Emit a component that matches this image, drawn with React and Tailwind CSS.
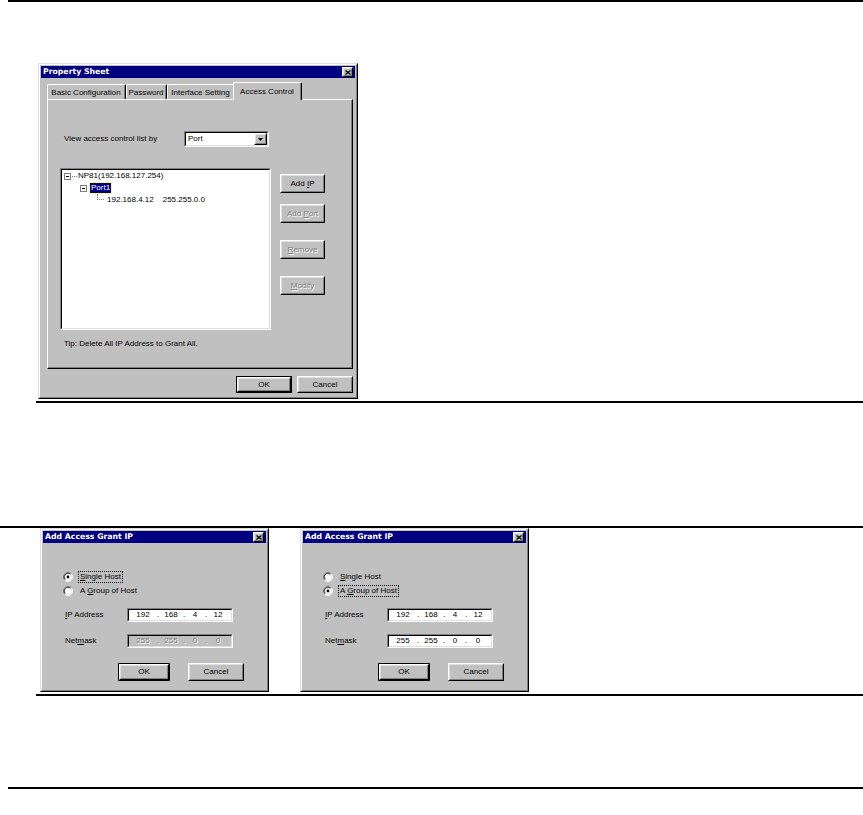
import React from "react";

const SANS = "font-['Liberation_Sans',Arial,sans-serif]";

function Raised({ className = "", children, def = false }) {
  const btn = (
    <div
      className={`border border-t-white border-l-white border-r-black border-b-black bg-[#c0c0c0] ${
        def ? "h-full w-full" : className
      }`}
    >
      <div className="h-full w-full border border-t-[#dfdfdf] border-l-[#dfdfdf] border-r-[#808080] border-b-[#808080] flex items-center justify-center">
        {children}
      </div>
    </div>
  );
  if (def) return <div className={`border border-black ${className}`}>{btn}</div>;
  return btn;
}

function Sunken({ className = "", inner = "", children }) {
  return (
    <div className={`border border-t-[#808080] border-l-[#808080] border-r-white border-b-white ${className}`}>
      <div className={`h-full w-full border border-t-black border-l-black border-r-[#dfdfdf] border-b-[#dfdfdf] ${inner}`}>
        {children}
      </div>
    </div>
  );
}

function Dis({ children }) {
  return <span className="text-[#808080] [text-shadow:1px_1px_0_#ffffff]">{children}</span>;
}

function U({ children }) {
  return <span className="underline underline-offset-[1px]">{children}</span>;
}

function CloseX() {
  return (
    <svg width="6" height="5" viewBox="0 0 6 5">
      <path d="M0.5 0.5L5.5 4.5M5.5 0.5L0.5 4.5" stroke="black" strokeWidth="1.3" />
    </svg>
  );
}

function Window({ w, h, title, children }) {
  return (
    <div className={`${w} ${h} border border-t-[#dfdfdf] border-l-[#dfdfdf] border-r-black border-b-black bg-[#c0c0c0] shrink-0`}>
      <div className="h-full w-full border border-t-white border-l-white border-r-[#808080] border-b-[#808080] p-[1px]">
        <div className="h-[12px] bg-[#000080] flex items-center justify-between pl-[2px] pr-[2px]">
          <span className="text-white font-bold text-[7.75px] leading-[12px] font-['DejaVu_Sans',sans-serif]">
            {title}
          </span>
          <Raised className="w-[11px] h-[10px]">
            <CloseX />
          </Raised>
        </div>
        {children}
      </div>
    </div>
  );
}

function Tab({ w, sel, children }) {
  return (
    <div
      className={`${w} ${
        sel ? "h-[18px] -ml-[2px]" : "h-[15px] mb-[1px]"
      } bg-[#c0c0c0] border-t border-l border-r border-t-white border-l-white border-r-black rounded-tl-[2px] rounded-tr-[2px] shrink-0`}
    >
      <div className={`h-full border-r border-r-[#808080] text-center whitespace-nowrap ${sel ? "pt-[4px]" : "pt-[3px]"}`}>
        {children}
      </div>
    </div>
  );
}

function MinusBox() {
  return (
    <svg width="7" height="7" viewBox="0 0 7 7" className="shrink-0">
      <rect x="0.5" y="0.5" width="6" height="6" fill="white" stroke="#808080" />
      <path d="M2 3.5H5" stroke="black" />
    </svg>
  );
}

function Tree() {
  return (
    <Sunken className="w-[211px] h-[162px]" inner="bg-white">
      <div className="flex items-center h-[12px] pl-[2px]">
        <MinusBox />
        <div className="w-[5px] ml-[1px] border-t border-dotted border-t-[#808080]" />
        <span className="ml-[1px] whitespace-nowrap">NP81(192.168.127.254)</span>
      </div>
      <div className="flex items-center h-[12px] pl-[18px]">
        <MinusBox />
        <span className="ml-[3px] px-[1px] bg-[#000080] text-white outline outline-1 outline-dotted outline-[#ffff00]">
          Port1
        </span>
      </div>
      <div className="flex items-start h-[12px] pl-[35px]">
        <div className="w-[7px] h-[6px] border-l border-b border-dotted border-l-[#808080] border-b-[#808080]" />
        <span className="ml-[3px] mt-[1px] whitespace-nowrap">192.168.4.12</span>
        <span className="ml-[9px] mt-[1px] whitespace-nowrap">255.255.0.0</span>
      </div>
    </Sunken>
  );
}

function PropertySheet() {
  return (
    <Window w="w-[320px]" h="h-[336px]" title="Property Sheet">
      <div className="ml-[6px] mt-[4px] w-[306px]">
        <div className="flex items-end h-[18px] relative z-10">
          <Tab w="w-[79px]">Basic Configuration</Tab>
          <Tab w="w-[41px]">Password</Tab>
          <Tab w="w-[68px]">Interface Setting</Tab>
          <Tab w="w-[69px]" sel>
            Access Control
          </Tab>
        </div>
        <div className="-mt-[1px] h-[270px] border border-t-white border-l-white border-r-black border-b-black">
          <div className="h-full border-r border-b border-r-[#808080] border-b-[#808080]">
            <div className="pl-[16px] pt-[31px] flex items-center">
              <span className="w-[120px] whitespace-nowrap">View access control list by</span>
              <Sunken className="w-[85px] h-[16px]" inner="bg-white flex items-center justify-between pl-[2px]">
                <span>Port</span>
                <Raised className="w-[13px] h-[12px]">
                  <svg width="5" height="3" viewBox="0 0 5 3">
                    <path d="M0 0H5L2.5 3Z" fill="black" />
                  </svg>
                </Raised>
              </Sunken>
            </div>
            <div className="flex mt-[21px] pl-[12px]">
              <Tree />
              <div className="ml-[9px] pt-[6px] flex flex-col">
                <Raised className="w-[45px] h-[19px]">
                  <span>
                    Add <U>I</U>P
                  </span>
                </Raised>
                <Raised className="w-[45px] h-[19px] mt-[11px]">
                  <Dis>
                    Add <U>P</U>ort
                  </Dis>
                </Raised>
                <Raised className="w-[45px] h-[19px] mt-[17px]">
                  <Dis>
                    <U>R</U>emove
                  </Dis>
                </Raised>
                <Raised className="w-[45px] h-[19px] mt-[17px]">
                  <Dis>
                    <U>M</U>odify
                  </Dis>
                </Raised>
              </div>
            </div>
            <div className="pl-[16px] mt-[9px] whitespace-nowrap">Tip: Delete All IP Address to Grant All.</div>
          </div>
        </div>
        <div className="flex justify-end gap-[5px] mt-[7px]">
          <Raised def className="w-[56px] h-[17px]">
            OK
          </Raised>
          <Raised className="w-[56px] h-[17px]">Cancel</Raised>
        </div>
      </div>
    </Window>
  );
}

function Radio({ checked }) {
  return (
    <svg width="10" height="10" viewBox="0 0 12 12" className="shrink-0">
      <circle cx="6" cy="6" r="5" fill="white" />
      <path d="M2.1 9.9 A5.5 5.5 0 0 1 9.9 2.1" stroke="#808080" fill="none" />
      <path d="M9.9 2.1 A5.5 5.5 0 0 1 2.1 9.9" stroke="white" fill="none" />
      <path d="M2.8 9.2 A4.5 4.5 0 0 1 9.2 2.8" stroke="black" fill="none" />
      <path d="M9.2 2.8 A4.5 4.5 0 0 1 2.8 9.2" stroke="#dfdfdf" fill="none" />
      {checked && <circle cx="6" cy="6" r="1.7" fill="black" />}
    </svg>
  );
}

function RadioRow({ checked, focus, children }) {
  return (
    <div className="flex items-center h-[14px]">
      <Radio checked={checked} />
      <span
        className={`ml-[6px] px-[1px] whitespace-nowrap ${
          focus ? "outline outline-1 outline-dotted outline-black" : ""
        }`}
      >
        {children}
      </span>
    </div>
  );
}

function IPField({ vals, disabled }) {
  return (
    <Sunken
      className="w-[106px] h-[14px]"
      inner={`${
        disabled ? "bg-[#c0c0c0] text-[#808080] [text-shadow:1px_1px_0_#ffffff]" : "bg-white"
      } flex items-center pl-[2px]`}
    >
      <span className="w-[24px] text-center">{vals[0]}</span>
      <span className="w-[6px] text-center">.</span>
      <span className="w-[20px] text-center">{vals[1]}</span>
      <span className="w-[6px] text-center">.</span>
      <span className="w-[16px] text-center">{vals[2]}</span>
      <span className="w-[6px] text-center">.</span>
      <span className="w-[18px] text-center">{vals[3]}</span>
    </Sunken>
  );
}

function GrantDialog({ group }) {
  return (
    <Window w="w-[229px]" h="h-[164px]" title="Add Access Grant IP">
      <div className="pl-[20px] pt-[27px]">
        <RadioRow checked={!group} focus={!group}>
          <U>S</U>ingle Host
        </RadioRow>
        <RadioRow checked={group} focus={group}>
          A <U>G</U>roup of Host
        </RadioRow>
        <div className="flex items-center mt-[10px] pl-[2px] h-[14px]">
          <span className="w-[62px] whitespace-nowrap">
            <U>I</U>P Address
          </span>
          <IPField vals={["192", "168", "4", "12"]} />
        </div>
        <div className="flex items-center mt-[12px] pl-[2px] h-[14px]">
          <span className="w-[62px] whitespace-nowrap">
            Net<U>m</U>ask
          </span>
          <IPField vals={["255", "255", "0", "0"]} disabled={!group} />
        </div>
        <div className="flex mt-[15px] ml-[55px] gap-[18px]">
          <Raised def className="w-[52px] h-[18px]">
            OK
          </Raised>
          <Raised className="w-[56px] h-[18px]">Cancel</Raised>
        </div>
      </div>
    </Window>
  );
}

export default function App() {
  return (
    <div className={`w-[863px] h-[815px] bg-white overflow-hidden ${SANS} text-[8px] leading-[10px] text-black`}>
      <div className="ml-[8px] h-[2px] bg-black" />
      <div className="pl-[38px] pt-[61px]">
        <PropertySheet />
      </div>
      <div className="ml-[36px] mt-[2px] h-[2px] bg-black" />
      <div className="h-[123px]" />
      <div className="h-[2px] bg-black" />
      <div className="flex pl-[40px] gap-[31px]">
        <GrantDialog group={false} />
        <GrantDialog group={true} />
      </div>
      <div className="ml-[36px] mt-[2px] h-[2px] bg-black" />
      <div className="h-[91px]" />
      <div className="ml-[8px] h-[2px] bg-black" />
    </div>
  );
}
